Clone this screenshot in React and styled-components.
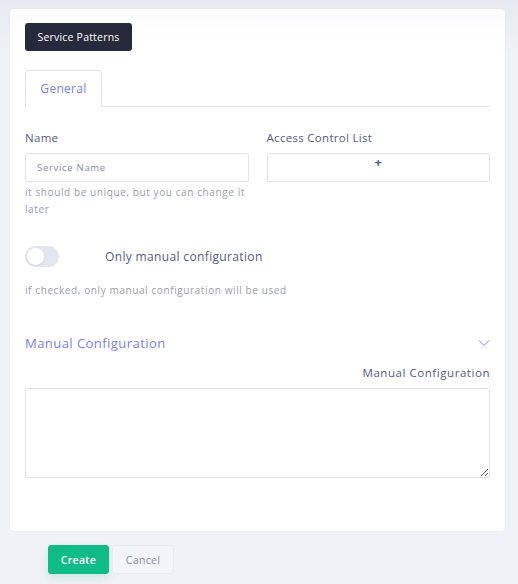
import React, { useState } from "react";
import styled, { createGlobalStyle } from "styled-components";

const GlobalStyle = createGlobalStyle`
  * { box-sizing: border-box; }
  html, body {
    margin: 0;
    padding: 0;
    background: linear-gradient(#e9e9f1, #f1f2f7 60px);
    font-family: "Open Sans", "Liberation Sans", sans-serif;
  }
  #root { min-height: 584px; }
`;

const Page = styled.div`
  padding: 9px 13px 0 10px;
`;

const Card = styled.div`
  background: linear-gradient(#fbfbfd, #ffffff 30px);
  border-radius: 4px;
  box-shadow: 0 0 1px rgba(60, 60, 100, 0.12);
  padding: 14px 15px 53px 15px;
  min-height: 521px;
`;

const TitleButton = styled.button`
  background: #272a3b;
  color: #fff;
  border: none;
  border-radius: 3px;
  height: 28px;
  width: 107px;
  padding: 0;
  font-family: inherit;
  font-size: 10.5px;
  font-weight: 500;
  letter-spacing: 0.2px;
`;

const Tabs = styled.div`
  display: flex;
  margin-top: 19px;
  border-bottom: 1px solid #e1e3ea;
`;

const Tab = styled.div`
  width: 77px;
  height: 37px;
  margin-bottom: -1px;
  display: flex;
  align-items: center;
  justify-content: center;
  font-size: 12px;
  letter-spacing: 0.3px;
  color: ${(p) => (p.$active ? "#7581f6" : "#545a8c")};
  background: #fff;
  border: 1px solid #e1e3ea;
  border-bottom-color: #fff;
  border-radius: 4px 4px 0 0;
`;

const Row = styled.div`
  display: grid;
  grid-template-columns: 1fr 1fr;
  column-gap: 18px;
  margin-top: 23px;
`;

const Field = styled.div`
  display: flex;
  flex-direction: column;
  margin-top: ${(p) => p.$top || 0}px;
`;

const Label = styled.label`
  font-size: 11.5px;
  letter-spacing: ${(p) => (p.$right ? 0.55 : 0.3)}px;
  color: #545a8c;
  line-height: 16px;
  text-align: ${(p) => (p.$right ? "right" : "left")};
`;

const Input = styled.input`
  margin-top: 7px;
  height: 29px;
  border: 1px solid #e3e5ec;
  border-radius: 2px;
  padding: 0 11px;
  font-family: inherit;
  font-size: 9.5px;
  letter-spacing: 0.7px;
  color: #545a8c;
  outline: none;
  &::placeholder { color: #8a8da6; }
`;

const AddBox = styled.div`
  margin-top: 7px;
  height: 29px;
  border: 1px solid #e3e5ec;
  border-radius: 2px;
  display: flex;
  justify-content: center;
  padding-top: 1px;
  color: #545a8c;
  font-size: 13px;
  font-weight: 700;
  line-height: 14px;
`;

const Help = styled.div`
  margin-top: ${(p) => p.$top ?? 2}px;
  font-size: 10px;
  letter-spacing: 0.6px;
  line-height: 17px;
  color: #9a9cae;
`;

const ToggleRow = styled.div`
  display: flex;
  align-items: center;
  margin-top: 28px;
`;

const Switch = styled.button`
  width: 34px;
  height: 21px;
  border-radius: 11px;
  border: none;
  padding: 2px;
  background: #e3e6ef;
  display: flex;
  justify-content: ${(p) => (p.$on ? "flex-end" : "flex-start")};
  cursor: pointer;
`;

const Knob = styled.span`
  width: 17px;
  height: 17px;
  border-radius: 50%;
  background: #fff;
  box-shadow: 0 1px 2px rgba(0, 0, 0, 0.08);
`;

const ToggleText = styled.span`
  margin-left: 46px;
  font-size: 12px;
  letter-spacing: 0.35px;
  color: #545a8c;
`;

const SectionHead = styled.div`
  display: flex;
  justify-content: space-between;
  align-items: center;
  margin-top: 35px;
  font-size: 13px;
  letter-spacing: 0.45px;
  color: #7581f6;
`;

const TextArea = styled.textarea`
  display: block;
  width: 100%;
  height: 90px;
  margin-top: 7px;
  border: 1px solid #e1e3ea;
  border-radius: 2px;
  font-family: inherit;
  outline: none;
`;

const Actions = styled.div`
  display: flex;
  gap: 3px;
  padding: 14px 0 0 38px;
`;

const ActionButton = styled.button`
  height: 29px;
  width: ${(p) => (p.$primary ? 61 : 62)}px;
  padding: 0;
  border-radius: 3px;
  font-family: inherit;
  font-size: 10.5px;
  letter-spacing: 0.3px;
  font-weight: ${(p) => (p.$primary ? 600 : 400)};
  color: ${(p) => (p.$primary ? "#fff" : "#878aa0")};
  background: ${(p) => (p.$primary ? "#0fbc87" : "#f3f4f9")};
  border: 1px solid ${(p) => (p.$primary ? "#0fbc87" : "#e9eaf4")};
  box-shadow: ${(p) => (p.$primary ? "0 4px 10px rgba(15, 188, 135, 0.18)" : "none")};
`;

const Chevron = () => (
  <svg width="12" height="8" viewBox="0 0 12 8" fill="none">
    <path d="M1 1.5l5 5 5-5" stroke="#7581f6" strokeWidth="1" />
  </svg>
);

export default function App() {
  const [manualOnly, setManualOnly] = useState(false);

  return (
    <Page>
      <GlobalStyle />
      <Card>
        <TitleButton>Service Patterns</TitleButton>
        <Tabs>
          <Tab $active>General</Tab>
        </Tabs>

        <Row>
          <Field>
            <Label>Name</Label>
            <Input placeholder="Service Name" />
            <Help>it should be unique, but you can change it later</Help>
          </Field>
          <Field>
            <Label>Access Control List</Label>
            <AddBox>+</AddBox>
          </Field>
        </Row>

        <ToggleRow>
          <Switch $on={manualOnly} onClick={() => setManualOnly(!manualOnly)}>
            <Knob />
          </Switch>
          <ToggleText>Only manual configuration</ToggleText>
        </ToggleRow>
        <Help $top={15}>if checked, only manual configuration will be used</Help>

        <SectionHead>
          <span>Manual Configuration</span>
          <Chevron />
        </SectionHead>
        <Field $top={13}>
          <Label $right>Manual Configuration</Label>
          <TextArea />
        </Field>
      </Card>
      <Actions>
        <ActionButton $primary>Create</ActionButton>
        <ActionButton>Cancel</ActionButton>
      </Actions>
    </Page>
  );
}
